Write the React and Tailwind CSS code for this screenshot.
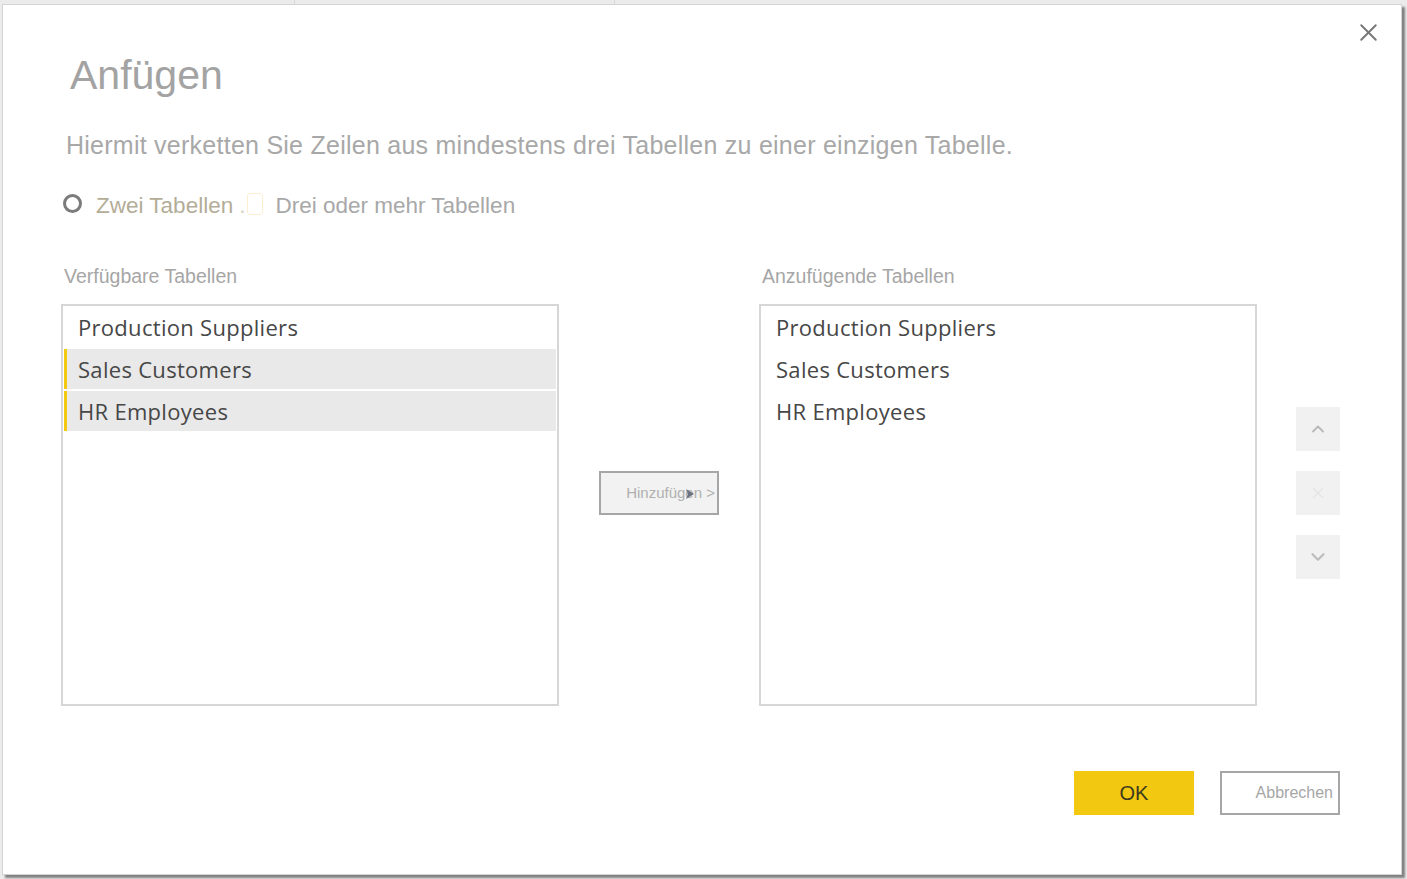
import { X, ChevronUp, ChevronDown } from "lucide-react";

const arial = { fontFamily: '"Liberation Sans", Arial, sans-serif' };
const segoe = { fontFamily: '"Open Sans", "Noto Sans", sans-serif' };

const tables = ["Production Suppliers", "Sales Customers", "HR Employees"];

function ListBox({ selected = [] }) {
  return (
    <div className="flex h-[402px] w-[498px] shrink-0 flex-col gap-[2px] border-2 border-[#d6d6d6] bg-white px-[1px] pt-[1px]">
      {tables.map((name) => {
        const isSel = selected.includes(name);
        return (
          <div
            key={name}
            className={
              isSel
                ? "flex h-[40px] items-center border-l-[3px] border-[#f2c811] bg-[#e9e9e9] pl-[11px] text-[22px] tracking-[0.3px] text-[#474747]"
                : "flex h-[40px] items-center border-l-[3px] border-transparent pl-[11px] text-[22px] tracking-[0.3px] text-[#474747]"
            }
            style={segoe}
          >
            {name}
          </div>
        );
      })}
    </div>
  );
}

function SideButton({ children }) {
  return (
    <div className="flex h-[44px] w-[44px] items-center justify-center bg-[#f1f1f1]">{children}</div>
  );
}

export default function App() {
  return (
    <div className="h-[879px] w-[1407px] overflow-hidden bg-[#ebebeb]" style={arial}>
      <div className="flex h-[4px]">
        <div className="w-[295px] border-r border-[#d9d9d9]" />
        <div className="w-[320px] border-r border-[#d9d9d9]" />
        <div className="flex-1" />
      </div>
      <div className="relative ml-[2px] h-[871px] w-[1400px] border border-[#d4d4d4] bg-white shadow-[3px_3px_2px_rgba(0,0,0,0.45)]">
        <button className="absolute right-[18px] top-[13px] text-[#777777]">
          <X size={29} strokeWidth={1.6} />
        </button>

        <div className="flex flex-col pl-[58px]">
          <h1 className="mt-[50px] pl-[9px] text-[41px] leading-[40px] font-normal text-[#a3a3a3]">Anfügen</h1>
          <p className="mt-[38px] pl-[5px] text-[25px] leading-[25px] tracking-[0.25px] text-[#a8a8a8]">
            Hiermit verketten Sie Zeilen aus mindestens drei Tabellen zu einer einzigen Tabelle.
          </p>

          <div className="mt-[37px] flex h-[22px] items-center text-[22.5px] leading-[22px]">
            <span className="ml-[2px] mt-[-6px] h-[19px] w-[19px] rounded-full border-[3px] border-[#7b7b7b]" />
            <span className="ml-[14px] text-[#b3ad98]">Zwei Tabellen</span>
            <span className="ml-[6px] text-[#d8d3c2]">.</span>
            <span className="ml-[2px] mt-[-4px] h-[22px] w-[16px] rounded-[3px] border border-[#fbefd0]" />
            <span className="ml-[12px] text-[#a8a8a8]">Drei oder mehr Tabellen</span>
          </div>

          <div className="mt-[50px] flex text-[19.5px] leading-[19px] text-[#a6a6a6]">
            <span className="w-[698px] pl-[3px]">Verfügbare Tabellen</span>
            <span className="pl-[3px]">Anzufügende Tabellen</span>
          </div>

          <div className="mt-[18px] flex items-start">
            <ListBox selected={["Sales Customers", "HR Employees"]} />
            <div className="flex w-[200px] shrink-0 justify-center pt-[167px]">
              <div className="relative flex h-[44px] w-[120px] items-center justify-end border-2 border-[#a6a6a6] bg-[#f2f2f2] pr-[2px] text-[15px] text-[#b0b0b0]">
                Hinzufügen &gt;
                <svg className="absolute left-[84px] top-[15px]" width="10" height="12" viewBox="0 0 10 12">
                  <path d="M1 1 L9 6 L1 11 L3 6 Z" fill="#6b7280" />
                </svg>
              </div>
            </div>
            <ListBox />
            <div className="ml-[39px] flex shrink-0 flex-col gap-[20px] pt-[103px]">
              <SideButton>
                <ChevronUp size={20} strokeWidth={2.2} className="text-[#b8b8b8]" />
              </SideButton>
              <SideButton>
                <X size={18} strokeWidth={2} className="text-[#e6e6e6]" />
              </SideButton>
              <SideButton>
                <ChevronDown size={22} strokeWidth={2.4} className="text-[#bdbdbd]" />
              </SideButton>
            </div>
          </div>

          <div className="mt-[65px] flex justify-end gap-[26px] pr-[61px]">
            <button className="flex h-[44px] w-[120px] items-center justify-center bg-[#f2c811] text-[20px] text-[#3d3a1e]">
              OK
            </button>
            <button className="flex h-[44px] w-[120px] items-center justify-end border-2 border-[#a6a6a6] bg-white pr-[5px] text-[16px] text-[#a6a6a6]">
              Abbrechen
            </button>
          </div>
        </div>
      </div>
    </div>
  );
}
